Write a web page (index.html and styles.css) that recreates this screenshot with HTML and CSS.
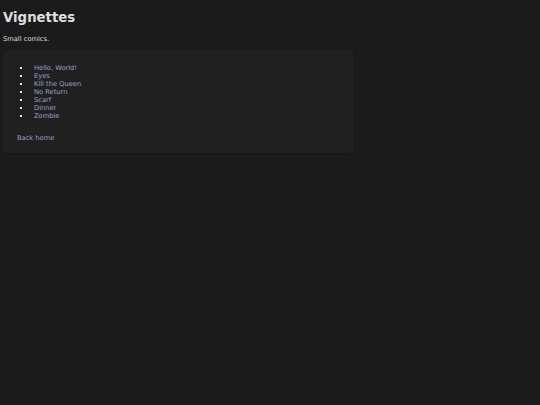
FILE: index.html
```html
<!DOCTYPE html>
<html>
<head>
<meta charset="utf-8">
<link rel="stylesheet" href="styles.css">
</head>
<body>
<h1 class="title">Vignettes</h1>
<p class="lead">Small comics.</p>
<div class="card">
  <ul class="list">
    <li><a href="#">Hello, World!</a></li>
    <li><a href="#">Eyes</a></li>
    <li><a href="#">Kill the Queen</a></li>
    <li><a href="#">No Return</a></li>
    <li><a href="#">Scarf</a></li>
    <li><a href="#">Dinner</a></li>
    <li><a href="#">Zombie</a></li>
  </ul>
  <a class="back" href="#">Back home</a>
</div>
</body>
</html>
```
FILE: styles.css
```css
html, body {
  background: #1b1b1b;
}
body {
  margin: 0;
  padding: 4px 3px 3px;
  font-family: "DejaVu Sans", sans-serif;
  color: #dedede;
  font-size: 6.7px;
}
.title {
  font-size: 13.3px;
  font-weight: bold;
  margin: 6px 0 0;
  line-height: 16px;
}
.lead {
  margin: 9px 0 0;
  line-height: 8px;
}
.card {
  margin-top: 7px;
  width: 351px;
  box-sizing: border-box;
  background: #202020;
  border-radius: 3px;
  box-shadow: 0 0 2px rgba(0,0,0,0.3);
  padding: 14px 14px 11px;
}
.list {
  margin: 0;
  padding-left: 3px;
  list-style: none;
  line-height: 8px;
}
.list li {
  display: flex;
  align-items: center;
}
.list li::before {
  content: "";
  width: 2px;
  height: 2px;
  background: #e0e0e0;
  margin-right: 12px;
}
a {
  color: #9ba0cb;
  text-decoration: none;
}
.back {
  display: block;
  margin-top: 14px;
  line-height: 8px;
}
```
